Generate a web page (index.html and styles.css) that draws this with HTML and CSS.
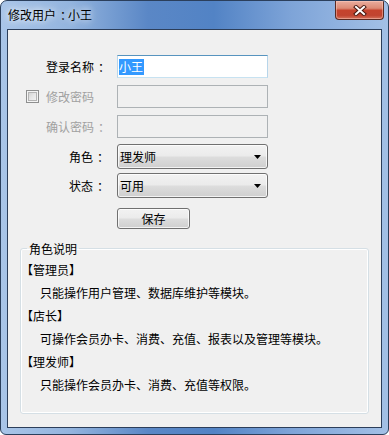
FILE: index.html
```html
<!DOCTYPE html>
<html lang="zh">
<head>
<meta charset="utf-8">
<title>修改用户</title>
<link rel="stylesheet" href="styles.css">
</head>
<body>
<div class="window">
  <div class="titlebar">
    <span class="title">修改用户<span class="colon">：</span>小王</span>
    <div class="close">
      <svg width="14" height="11" viewBox="0 0 14 11">
        <path d="M3 2 L11 9 M11 2 L3 9" stroke="#4a1a12" stroke-width="4" stroke-linecap="square" fill="none"/>
        <path d="M3 2 L11 9 M11 2 L3 9" stroke="#ffffff" stroke-width="2" stroke-linecap="square" fill="none"/>
      </svg>
    </div>
  </div>
  <div class="frame-body">
    <div class="client">
      <div class="form">
        <div class="row r-input">
          <span class="chk-slot"></span>
          <span class="label">登录名称<span class="colon">：</span></span>
          <div class="input focus"><span class="sel">小王</span></div>
        </div>
        <div class="row r-input">
          <span class="chk-slot"><span class="checkbox"></span></span>
          <span class="label left disabled">修改密码</span>
          <div class="input disabled-box"></div>
        </div>
        <div class="row r-input r3">
          <span class="chk-slot"></span>
          <span class="label left disabled">确认密码<span class="colon">：</span></span>
          <div class="input disabled-box"></div>
        </div>
        <div class="row r-select">
          <span class="chk-slot"></span>
          <span class="label">角色<span class="colon">：</span></span>
          <div class="combo"><span>理发师</span>
            <svg width="7" height="4" viewBox="0 0 7 4"><path d="M0 0 H7 L3.5 4 Z" fill="#000"/></svg>
          </div>
        </div>
        <div class="row r-select r5">
          <span class="chk-slot"></span>
          <span class="label">状态<span class="colon">：</span></span>
          <div class="combo"><span>可用</span>
            <svg width="7" height="4" viewBox="0 0 7 4"><path d="M0 0 H7 L3.5 4 Z" fill="#000"/></svg>
          </div>
        </div>
        <div class="row r-btn">
          <span class="chk-slot"></span>
          <span class="label"></span>
          <div class="button">保存</div>
        </div>
      </div>
      <fieldset class="group">
        <legend>角色说明</legend>
        <div class="line head">【管理员】</div>
        <div class="line desc">只能操作用户管理、数据库维护等模块。</div>
        <div class="line head">【店长】</div>
        <div class="line desc">可操作会员办卡、消费、充值、报表以及管理等模块。</div>
        <div class="line head">【理发师】</div>
        <div class="line desc">只能操作会员办卡、消费、充值等权限。</div>
      </fieldset>
    </div>
  </div>
</div>
</body>
</html>
```

FILE: styles.css
```css
html, body {
  margin: 0;
  padding: 0;
  background: #ffffff;
}

body {
  font-family: "Noto Sans CJK SC", "Noto Sans", sans-serif;
  font-size: 12px;
  line-height: 16px;
  color: #000;
}

/* centre the full-width colon like the Windows UI font does */
.colon {
  margin-left: 4px;
  letter-spacing: -4px;
}

.window {
  width: 389px;
  height: 435px;
  box-sizing: border-box;
  border: 1px solid #2b3f5c;
  border-radius: 7px 7px 6px 6px;
  background: linear-gradient(90deg, #a9c5e8 0%, #93b4de 18%, #5a87c6 38%, #5283c5 55%, #7ea4d8 75%, #a3c0e6 100%);
  display: flex;
  flex-direction: column;
  overflow: hidden;
}

.titlebar {
  height: 28px;
  display: flex;
  align-items: flex-start;
  justify-content: space-between;
}

.title {
  margin: 6px 0 0 7px;
  color: #000;
  text-shadow: 0 0 6px rgba(255, 255, 255, 0.9), 0 0 10px rgba(255, 255, 255, 0.7);
}

.close {
  width: 47px;
  height: 18px;
  margin-right: 4px;
  border: 1px solid #5a2a22;
  border-top: none;
  border-radius: 0 0 4px 4px;
  background: linear-gradient(180deg, #e9ad9e 0%, #dc8a75 40%, #c5432d 52%, #c14430 80%, #d4725c 100%);
  box-shadow: inset 0 0 0 1px rgba(255, 210, 200, 0.45);
  display: flex;
  align-items: center;
  justify-content: center;
}

.frame-body {
  flex: 1;
  padding: 0 6px 6px 6px;
  display: flex;
}

.client {
  flex: 1;
  border: 1px solid #2c3e5a;
  background: #f0f0f0;
  display: flex;
  flex-direction: column;
}

.form {
  padding-top: 25px;
  display: flex;
  flex-direction: column;
}

.row {
  display: flex;
  align-items: center;
  padding-left: 18px;
}

.r-input {
  height: 23px;
  margin-bottom: 7px;
}

.r3 {
  margin-bottom: 6px;
}

.r-select {
  height: 25px;
  margin-bottom: 4px;
}

.r5 {
  margin-bottom: 10px;
}

.r-btn {
  height: 21px;
}

.chk-slot {
  width: 13px;
  height: 13px;
  margin-right: 7px;
  display: flex;
}

.checkbox {
  width: 13px;
  height: 13px;
  box-sizing: border-box;
  border: 1px solid #8e8f8f;
  box-shadow: inset 0 0 0 1px #f4f4f4, inset 0 0 0 2px #b4b4b4;
  background-image: linear-gradient(135deg, #cbcbcb 0%, #e6e6e6 50%, #f8f8f8 100%);
}

.label {
  width: 59px;
  margin-right: 12px;
  text-align: right;
  white-space: nowrap;
}

.label.left {
  text-align: left;
}

.disabled {
  color: #a0a0a0;
}

.input {
  width: 151px;
  height: 23px;
  box-sizing: border-box;
  border: 1px solid #abadb3;
  background: #fff;
  display: flex;
  align-items: center;
  padding-left: 1px;
}

.input.focus {
  border-color: #5794bf #b7d5ea #c7e2f1 #b7d5ea;
}

.disabled-box {
  background: #f0f0f0;
  border-color: #adb2b5;
}

.sel {
  background: #3399ff;
  color: #fff;
  line-height: 16px;
  padding: 0 1px 0 0;
}

.combo,
.button {
  box-sizing: border-box;
  border: 1px solid #707070;
  border-radius: 3px;
  background: linear-gradient(180deg, #f2f2f2 0%, #ebebeb 48%, #dddddd 52%, #cfcfcf 100%);
  box-shadow: inset 0 0 0 1px rgba(255, 255, 255, 0.75);
}

.combo {
  width: 151px;
  height: 25px;
  display: flex;
  align-items: center;
  justify-content: space-between;
  padding: 0 6px 0 2px;
}

.combo svg {
  display: block;
}

.button {
  width: 73px;
  height: 21px;
  display: flex;
  align-items: center;
  justify-content: center;
}

.group {
  margin: 11px 12px 13px 12px;
  padding: 1px 6px 0 6px;
  border: 1px solid #d5dfe5;
  border-radius: 3px;
  box-shadow: inset 0 0 0 1px #ffffff;
  flex: 1;
  min-width: 0;
}

.group legend {
  padding: 0 2px;
  line-height: 17px;
}

.line {
  height: 23px;
  line-height: 23px;
  white-space: nowrap;
}

.line.head {
  margin-left: -6px;
}

.line.desc {
  padding-left: 13px;
}
```
